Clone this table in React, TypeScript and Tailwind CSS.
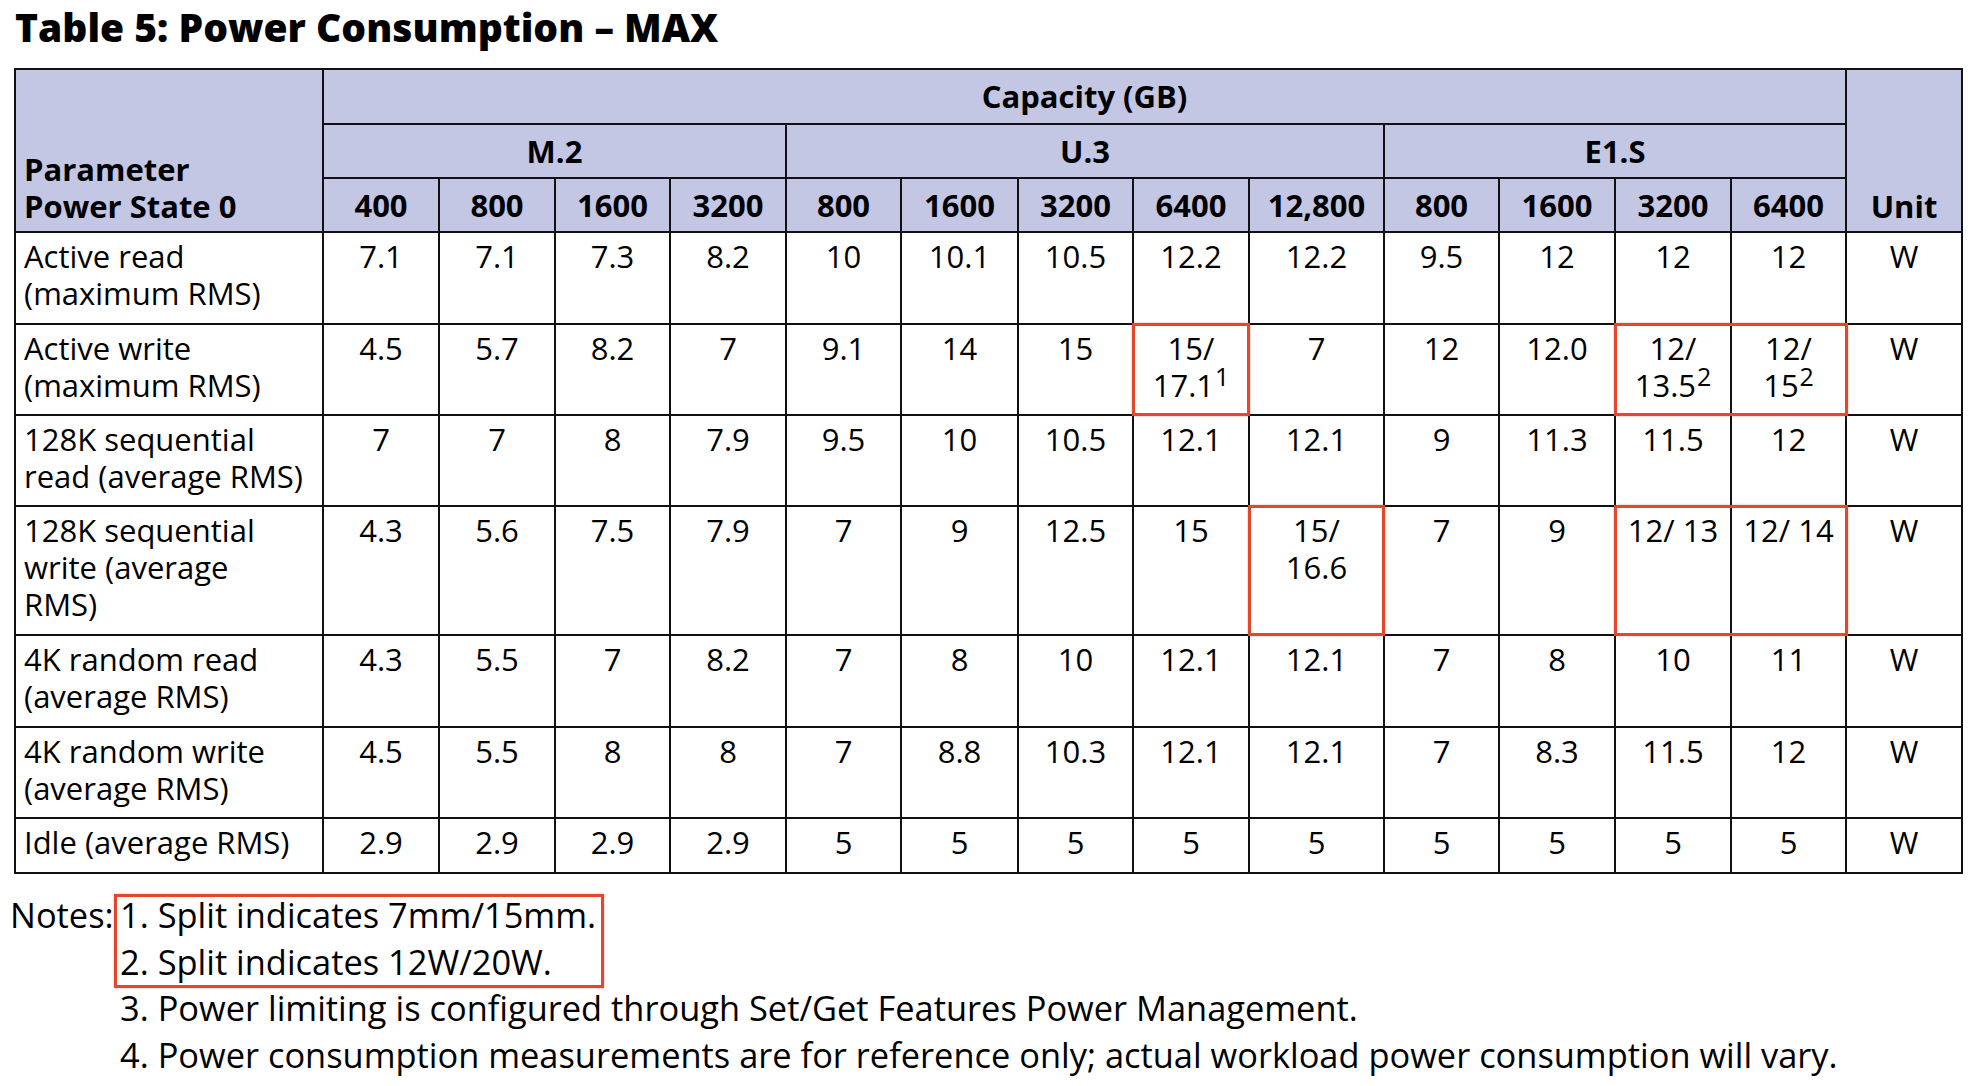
import React from 'react'

type Cell = string | React.ReactNode

interface Row {
  label: React.ReactNode
  values: Cell[]
  height: string
}

const Sup = ({ n }: { n: string }) => (
  <sup className="text-[25px] leading-none relative top-[-11px] align-baseline ml-[1px]">{n}</sup>
)

const rows: Row[] = [
  {
    label: <>Active read<br />(maximum RMS)</>,
    values: ['7.1', '7.1', '7.3', '8.2', '10', '10.1', '10.5', '12.2', '12.2', '9.5', '12', '12', '12'],
    height: 'h-[92px]',
  },
  {
    label: <>Active write<br />(maximum RMS)</>,
    values: [
      '4.5', '5.7', '8.2', '7', '9.1', '14', '15',
      <>15/<br />17.1<Sup n="1" /></>,
      '7', '12', '12.0',
      <>12/<br />13.5<Sup n="2" /></>,
      <>12/<br />15<Sup n="2" /></>,
    ],
    height: 'h-[91px]',
  },
  {
    label: <>128K sequential<br />read (average RMS)</>,
    values: ['7', '7', '8', '7.9', '9.5', '10', '10.5', '12.1', '12.1', '9', '11.3', '11.5', '12'],
    height: 'h-[91px]',
  },
  {
    label: <>128K sequential<br />write (average<br />RMS)</>,
    values: ['4.3', '5.6', '7.5', '7.9', '7', '9', '12.5', '15', <>15/<br />16.6</>, '7', '9', '12/ 13', '12/ 14'],
    height: 'h-[129px]',
  },
  {
    label: <>4K random read<br />(average RMS)</>,
    values: ['4.3', '5.5', '7', '8.2', '7', '8', '10', '12.1', '12.1', '7', '8', '10', '11'],
    height: 'h-[92px]',
  },
  {
    label: <>4K random write<br />(average RMS)</>,
    values: ['4.5', '5.5', '8', '8', '7', '8.8', '10.3', '12.1', '12.1', '7', '8.3', '11.5', '12'],
    height: 'h-[91px]',
  },
  {
    label: 'Idle (average RMS)',
    values: ['2.9', '2.9', '2.9', '2.9', '5', '5', '5', '5', '5', '5', '5', '5', '5'],
    height: 'h-[55px]',
  },
]

// red call-outs keyed by row-col; value is how far the box reaches right
const highlights: Record<string, string> = {
  '1-7': 'right-[-2px]',
  '1-11': 'right-[-118px]',
  '3-8': 'right-[-2px]',
  '3-11': 'right-[-118px]',
}

const capacities = ['400', '800', '1600', '3200', '800', '1600', '3200', '6400', '12,800', '800', '1600', '3200', '6400']
const colWidths = ['w-[116px]', 'w-[116px]', 'w-[115px]', 'w-[116px]', 'w-[115px]', 'w-[117px]', 'w-[115px]', 'w-[116px]', 'w-[135px]', 'w-[115px]', 'w-[116px]', 'w-[116px]', 'w-[115px]']

const RedBox = ({ right }: { right: string }) => (
  <div className={`absolute left-[-2px] top-[-2px] bottom-[-2px] ${right} border-[3px] border-[#e4472a] shadow-[0_0_2px_rgba(120,30,10,0.35)] pointer-events-none`} />
)

export default function App() {
  return (
    <div className="bg-white w-[1978px] h-[1086px] text-black font-['Open_Sans','Noto_Sans',sans-serif] pl-[14px]">
      <h1 className="text-[39px] font-extrabold leading-[46px] pt-[4px] pl-px">
        Table 5: Power Consumption – MAX
      </h1>

      <table className="mt-[18px] table-fixed border-collapse w-[1948px] border-2 border-[#111] text-[31px]">
        <colgroup>
          <col className="w-[308px]" />
          {colWidths.map((w, i) => (
            <col key={i} className={w} />
          ))}
          <col className="w-[116px]" />
        </colgroup>
        <thead className="bg-[#c4c7e4] font-bold">
          <tr className="h-[55px]">
            <th rowSpan={3} className="border-2 border-[#111] text-left align-bottom px-[8px] pb-[6px] leading-[37px] font-bold">
              Parameter<br />Power State 0
            </th>
            <th colSpan={13} className="border-2 border-[#111] text-center align-middle leading-[37px]">
              Capacity (GB)
            </th>
            <th rowSpan={3} className="border-2 border-[#111] text-center align-bottom pb-[6px] leading-[37px]">
              Unit
            </th>
          </tr>
          <tr className="h-[54px]">
            <th colSpan={4} className="border-2 border-[#111] text-center leading-[37px]">M.2</th>
            <th colSpan={5} className="border-2 border-[#111] text-center leading-[37px]">U.3</th>
            <th colSpan={4} className="border-2 border-[#111] text-center leading-[37px]">E1.S</th>
          </tr>
          <tr className="h-[54px]">
            {capacities.map((c, i) => (
              <th key={i} className="border-2 border-[#111] text-center leading-[37px] px-0">
                {c}
              </th>
            ))}
          </tr>
        </thead>
        <tbody>
          {rows.map((row, r) => (
            <tr key={r} className={row.height}>
              <td className="border-2 border-[#111] align-top text-left px-[8px] pt-[5px] leading-[37px]">
                {row.label}
              </td>
              {row.values.map((v, c) => {
                const hl = highlights[`${r}-${c}`]
                return (
                  <td key={c} className="relative border-2 border-[#111] align-top text-center pt-[5px] leading-[37px] px-0">
                    {v}
                    {hl && <RedBox right={hl} />}
                  </td>
                )
              })}
              <td className="border-2 border-[#111] align-top text-center pt-[5px] leading-[37px]">W</td>
            </tr>
          ))}
        </tbody>
      </table>

      <div className="flex mt-[18px] text-[34.4px] leading-[46.5px]">
        <div className="w-[110px] shrink-0 ml-[-4px]">Notes:</div>
        <div className="flex flex-col">
          <div className="relative w-fit pr-[8px]">
            <div className="absolute left-[-6px] top-[2px] bottom-[-3px] right-0 border-[3px] border-[#e4472a] shadow-[0_0_2px_rgba(120,30,10,0.35)]" />
            <div>1. Split indicates 7mm/15mm.</div>
            <div>2. Split indicates 12W/20W.</div>
          </div>
          <div>3. Power limiting is configured through Set/Get Features Power Management.</div>
          <div>4. Power consumption measurements are for reference only; actual workload power consumption will vary.</div>
        </div>
      </div>
    </div>
  )
}
